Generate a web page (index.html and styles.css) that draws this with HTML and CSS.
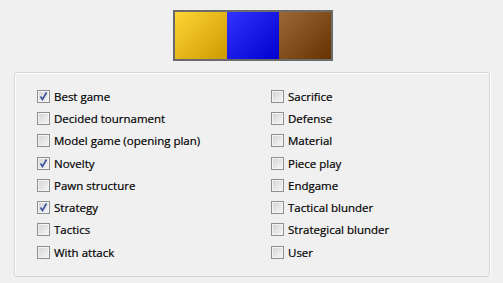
FILE: index.html
```html
<!DOCTYPE html>
<html lang="en">
<head>
    <meta charset="UTF-8">
    <title>Annotation Flags</title>
    <link rel="stylesheet" href="styles.css">
</head>
<body>

    <div class="swatches">
        <div class="swatch yellow"></div>
        <div class="swatch blue"></div>
        <div class="swatch brown"></div>
    </div>

    <div class="group">
        <label class="row"><span class="box checked"><svg viewBox="0 0 11 11"><path d="M2.5 5.5 L4.5 8.5 L8.5 1.5" /></svg></span>Best game</label>
        <label class="row"><span class="box"></span>Decided tournament</label>
        <label class="row"><span class="box"></span>Model game (opening plan)</label>
        <label class="row"><span class="box checked"><svg viewBox="0 0 11 11"><path d="M2.5 5.5 L4.5 8.5 L8.5 1.5" /></svg></span>Novelty</label>
        <label class="row"><span class="box"></span>Pawn structure</label>
        <label class="row"><span class="box checked"><svg viewBox="0 0 11 11"><path d="M2.5 5.5 L4.5 8.5 L8.5 1.5" /></svg></span>Strategy</label>
        <label class="row"><span class="box"></span>Tactics</label>
        <label class="row"><span class="box"></span>With attack</label>

        <label class="row"><span class="box"></span>Sacrifice</label>
        <label class="row"><span class="box"></span>Defense</label>
        <label class="row"><span class="box"></span>Material</label>
        <label class="row"><span class="box"></span>Piece play</label>
        <label class="row"><span class="box"></span>Endgame</label>
        <label class="row"><span class="box"></span>Tactical blunder</label>
        <label class="row"><span class="box"></span>Strategical blunder</label>
        <label class="row"><span class="box"></span>User</label>
    </div>

</body>
</html>
```

FILE: styles.css
```css
body {
    margin: 0;
    background: #f0f0f0;
    font-family: "Open Sans", "Noto Sans", sans-serif;
    font-size: 11.5px;
    color: #000;
}
.swatches {
    display: flex;
    width: 156px;
    height: 47px;
    margin: 10px 0 0 173px;
    border: 2px solid #6a6a6a;
}
.swatch {
    flex: 1;
}
.yellow {
    background: linear-gradient(135deg, #ffd535, #cc9900);
}
.blue {
    background: linear-gradient(135deg, #3333ff, #0000cc);
}
.brown {
    background: linear-gradient(135deg, #9c6836, #663300);
}
.group {
    display: grid;
    grid-auto-flow: column;
    grid-template-rows: repeat(8, 22.3px);
    grid-template-columns: 234px 1fr;
    width: 452px;
    height: 180px;
    margin: 11px 0 0 14px;
    padding: 12px 0 11px 22px;
    border: 1px solid #d5d5d5;
    border-radius: 3px;
    box-shadow: inset 1px 1px 0 #fff, 1px 1px 0 #fff;
}
.row {
    display: flex;
    align-items: center;
    gap: 4px;
    white-space: nowrap;
    color: #000;
    -webkit-text-stroke: 0.2px #000;
}
.box {
    width: 11px;
    height: 11px;
    border: 1px solid #8e8f8f;
    background: linear-gradient(135deg, #d2d2d2, #f7f7f7);
    box-shadow: inset 0 0 0 1px #f4f4f4;
}
.box svg {
    display: block;
    width: 11px;
    height: 11px;
}
.box svg path {
    fill: none;
    stroke: #3a4f9a;
    stroke-width: 1.6;
}
```
